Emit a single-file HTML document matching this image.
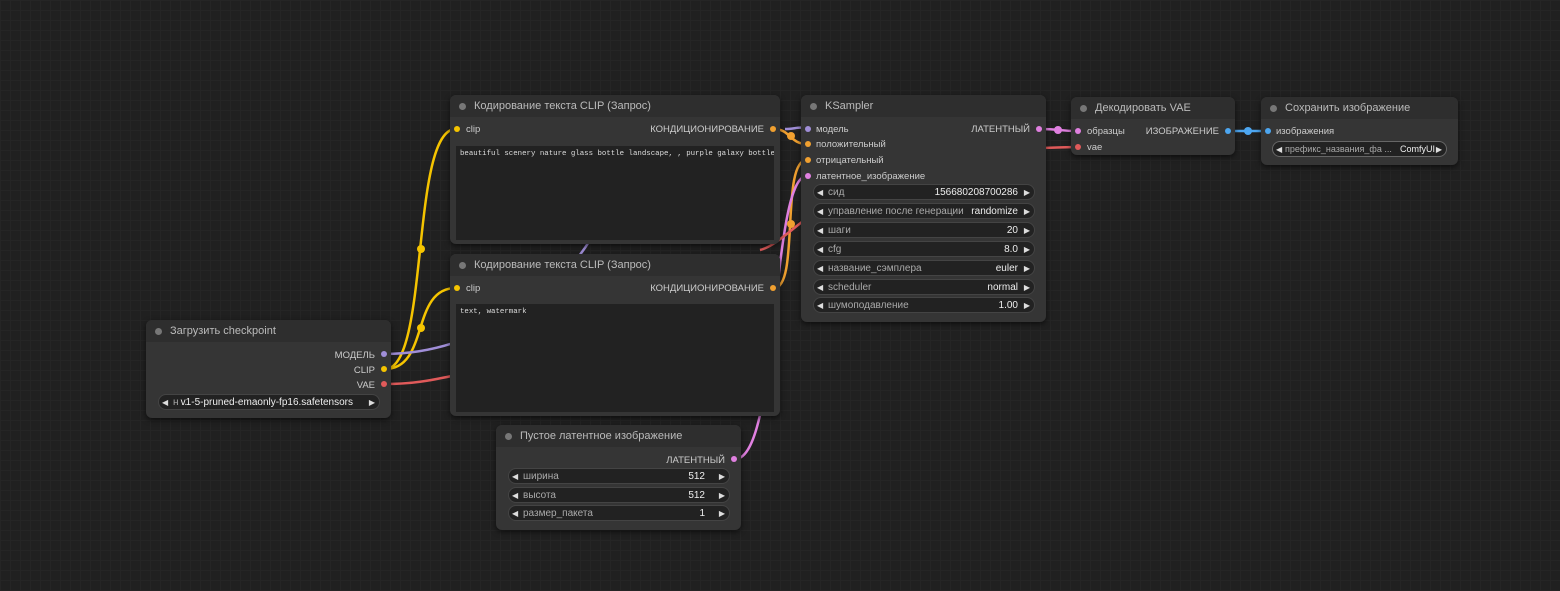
<!DOCTYPE html>
<html><head><meta charset="utf-8"><style>
*{margin:0;padding:0;box-sizing:border-box}
body{width:1560px;height:591px;overflow:hidden;font-family:"Liberation Sans","DejaVu Sans",sans-serif;position:relative;
background-image:linear-gradient(#252525 1px,transparent 1px),linear-gradient(90deg,#252525 1px,transparent 1px);background-size:10px 10px;background-color:#202020}
.n{position:absolute;background:#353535;border-radius:6px;box-shadow:0 2px 6px rgba(0,0,0,.6)}
.t{height:22px;background:#2e2e2e;border-radius:6px 6px 0 0;color:#bbb;font-size:11px;line-height:23px;padding-left:24px;position:relative}
.t:before{content:"";position:absolute;left:9px;top:8px;width:7px;height:7px;border-radius:50%;background:#777}
.s{position:absolute;font-size:9.5px;color:#ccc;white-space:nowrap;margin-top:1px}
.d{position:absolute;width:6px;height:6px;border-radius:50%}
.w{position:absolute;height:16px;border-radius:8px;background:#222;border:1px solid #444;font-size:10px;color:#aaa;line-height:15px;white-space:nowrap}
.w .l{position:absolute;left:14px}
.w .v{position:absolute;right:16px;color:#eee}
.w:before{content:"◀";position:absolute;left:3px;font-size:8px;color:#ddd}
.w:after{content:"▶";position:absolute;right:4px;font-size:8px;color:#ddd}
.ta{position:absolute;background:#222;font-family:"Liberation Mono",monospace;font-size:7.4px;color:#ddd;padding:4px;white-space:nowrap;overflow:hidden}
</style></head><body>
<svg width="1560" height="591" style="position:absolute;left:0;top:0">
<g fill="none" stroke-width="2.5">
<path d="M385 369 C430 369 410 129 456 129" stroke="#f5c400"/>
<path d="M385 369 C430 369 410 288 456 288" stroke="#f5c400"/>
<path d="M385 354 C480 354 560 290 590 240" stroke="#a08ed8"/>
<path d="M385 384 C420 384 440 378 452 376" stroke="#e05a5a"/>
<path d="M774 129 C790 129 790 144 807 144" stroke="#f0a030"/>
<path d="M774 288 C800 288 780 160 807 160" stroke="#f0a030"/>
<path d="M735 459 C780 459 770 176 807 176" stroke="#e080e0"/>
<path d="M760 250 C800 240 830 150 1077 147" stroke="#e05a5a"/>
<path d="M785 129 C795 129 800 126 807 129" stroke="#a08ed8"/>
<path d="M1040 129 C1060 129 1060 131 1077 131" stroke="#e080e0"/>
<path d="M1229 131 L1267 131" stroke="#4da6f0"/>
</g>
<circle cx="421" cy="249" r="4" fill="#f5c400"/><circle cx="421" cy="328" r="4" fill="#f5c400"/>
<circle cx="791" cy="136" r="4" fill="#f0a030"/><circle cx="791" cy="224" r="4" fill="#f0a030"/>
<circle cx="1058" cy="130" r="4" fill="#e080e0"/><circle cx="1248" cy="131" r="4" fill="#4da6f0"/>
</svg>

<div class="n" style="left:450px;top:95px;width:330px;height:149px"><div class="t">Кодирование текста CLIP (Запрос)</div>
<div class="d" style="left:4px;top:31px;background:#f5c400"></div><div class="s" style="left:16px;top:28px">clip</div>
<div class="s" style="right:16px;top:28px">КОНДИЦИОНИРОВАНИЕ</div><div class="d" style="right:4px;top:31px;background:#f0a030"></div>
<div class="ta" style="left:6px;top:51px;width:318px;height:94px">beautiful scenery nature glass bottle landscape, , purple galaxy bottle,</div></div>

<div class="n" style="left:450px;top:254px;width:330px;height:162px"><div class="t">Кодирование текста CLIP (Запрос)</div>
<div class="d" style="left:4px;top:31px;background:#f5c400"></div><div class="s" style="left:16px;top:28px">clip</div>
<div class="s" style="right:16px;top:28px">КОНДИЦИОНИРОВАНИЕ</div><div class="d" style="right:4px;top:31px;background:#f0a030"></div>
<div class="ta" style="left:6px;top:50px;width:318px;height:108px">text, watermark</div></div>

<div class="n" style="left:801px;top:95px;width:245px;height:227px"><div class="t">KSampler</div>
<div class="d" style="left:4px;top:31px;background:#a08ed8"></div><div class="s" style="left:15px;top:28px">модель</div>
<div class="s" style="right:16px;top:28px">ЛАТЕНТНЫЙ</div><div class="d" style="right:4px;top:31px;background:#e080e0"></div>
<div class="d" style="left:4px;top:46px;background:#f0a030"></div><div class="s" style="left:15px;top:43px">положительный</div>
<div class="d" style="left:4px;top:62px;background:#f0a030"></div><div class="s" style="left:15px;top:59px">отрицательный</div>
<div class="d" style="left:4px;top:78px;background:#e080e0"></div><div class="s" style="left:15px;top:75px">латентное_изображение</div>
<div class="w" style="left:12px;top:89px;width:222px"><span class="l">сид</span><span class="v">156680208700286</span></div>
<div class="w" style="left:12px;top:108px;width:222px"><span class="l">управление после генерации</span><span class="v">randomize</span></div>
<div class="w" style="left:12px;top:127px;width:222px"><span class="l">шаги</span><span class="v">20</span></div>
<div class="w" style="left:12px;top:146px;width:222px"><span class="l">cfg</span><span class="v">8.0</span></div>
<div class="w" style="left:12px;top:165px;width:222px"><span class="l">название_сэмплера</span><span class="v">euler</span></div>
<div class="w" style="left:12px;top:184px;width:222px"><span class="l">scheduler</span><span class="v">normal</span></div>
<div class="w" style="left:12px;top:202px;width:222px"><span class="l">шумоподавление</span><span class="v">1.00</span></div></div>

<div class="n" style="left:1071px;top:97px;width:164px;height:58px"><div class="t">Декодировать VAE</div>
<div class="d" style="left:4px;top:31px;background:#e080e0"></div><div class="s" style="left:16px;top:28px">образцы</div>
<div class="s" style="right:16px;top:28px">ИЗОБРАЖЕНИЕ</div><div class="d" style="right:4px;top:31px;background:#4da6f0"></div>
<div class="d" style="left:4px;top:47px;background:#e05a5a"></div><div class="s" style="left:16px;top:44px">vae</div></div>

<div class="n" style="left:1261px;top:97px;width:197px;height:68px"><div class="t">Сохранить изображение</div>
<div class="d" style="left:4px;top:31px;background:#4da6f0"></div><div class="s" style="left:15px;top:28px">изображения</div>
<div class="w" style="left:11px;top:44px;width:175px;border-color:#666;font-size:9px"><span class="l" style="left:12px">префикс_названия_фа ...</span><span class="v" style="right:11px">ComfyUI</span></div></div>

<div class="n" style="left:146px;top:320px;width:245px;height:98px"><div class="t">Загрузить checkpoint</div>
<div class="s" style="right:16px;top:29px">МОДЕЛЬ</div><div class="d" style="right:4px;top:31px;background:#a08ed8"></div>
<div class="s" style="right:16px;top:44px">CLIP</div><div class="d" style="right:4px;top:46px;background:#f5c400"></div>
<div class="s" style="right:16px;top:59px">VAE</div><div class="d" style="right:4px;top:61px;background:#e05a5a"></div>
<div class="w" style="left:12px;top:74px;width:222px"><span class="l">н ...</span><span class="v" style="right:26px">v1-5-pruned-emaonly-fp16.safetensors</span></div></div>

<div class="n" style="left:496px;top:425px;width:245px;height:105px"><div class="t">Пустое латентное изображение</div>
<div class="s" style="right:16px;top:29px">ЛАТЕНТНЫЙ</div><div class="d" style="right:4px;top:31px;background:#e080e0"></div>
<div class="w" style="left:12px;top:43px;width:222px"><span class="l">ширина</span><span class="v" style="right:24px">512</span></div>
<div class="w" style="left:12px;top:62px;width:222px"><span class="l">высота</span><span class="v" style="right:24px">512</span></div>
<div class="w" style="left:12px;top:80px;width:222px"><span class="l">размер_пакета</span><span class="v" style="right:24px">1</span></div></div>
</body></html>
